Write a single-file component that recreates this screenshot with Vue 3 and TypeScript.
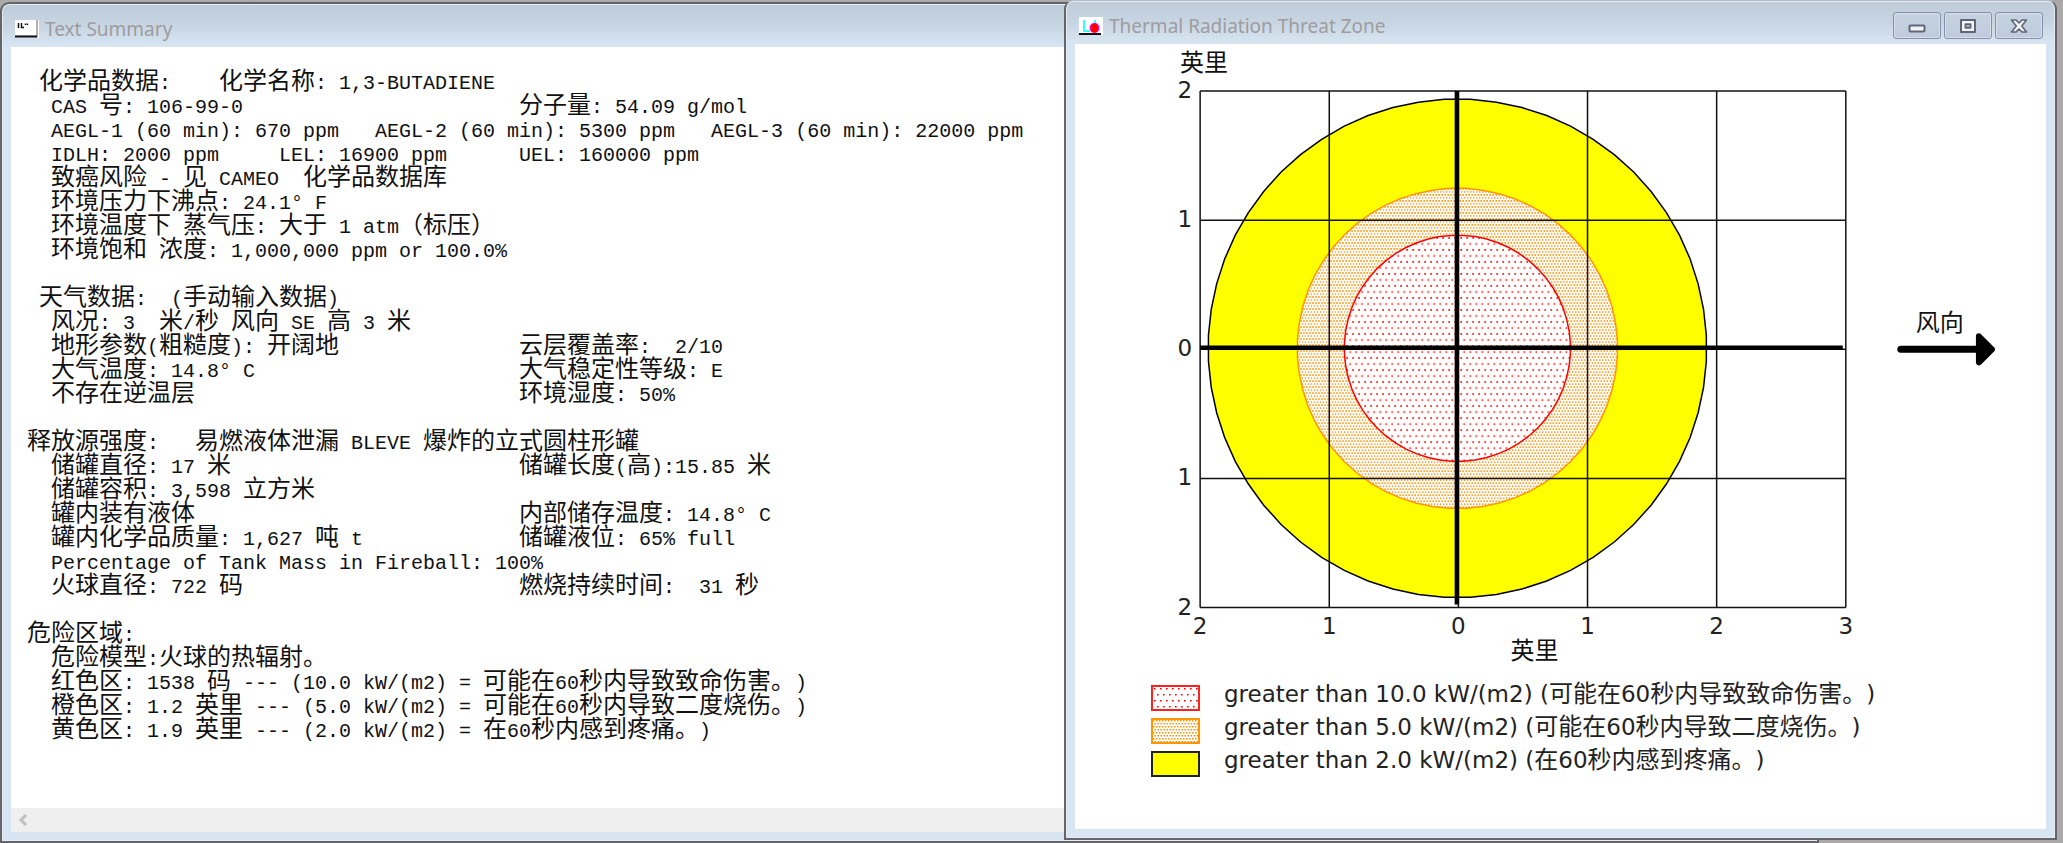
<script setup lang="ts">
type Row = [col: number, text: string, right?: string]
interface Run { text: string; wide: boolean }

const RIGHT_COLUMN = 41
const WIDE = /[\u3001-\u303f\u4e00-\u9fff\uff00-\uffef]/

const rows: Row[] = [
  [1, '化学品数据:    化学名称: 1,3-BUTADIENE'],
  [2, 'CAS 号: 106-99-0', '分子量: 54.09 g/mol'],
  [2, 'AEGL-1 (60 min): 670 ppm   AEGL-2 (60 min): 5300 ppm   AEGL-3 (60 min): 22000 ppm'],
  [2, 'IDLH: 2000 ppm     LEL: 16900 ppm', 'UEL: 160000 ppm'],
  [2, '致癌风险 - 见 CAMEO  化学品数据库'],
  [2, '环境压力下沸点: 24.1° F'],
  [2, '环境温度下 蒸气压: 大于 1 atm（标压）'],
  [2, '环境饱和 浓度: 1,000,000 ppm or 100.0%'],
  [0, ''],
  [1, '天气数据:  (手动输入数据)'],
  [2, '风况: 3  米/秒 风向 SE 高 3 米'],
  [2, '地形参数(粗糙度): 开阔地', '云层覆盖率:  2/10'],
  [2, '大气温度: 14.8° C', '大气稳定性等级: E'],
  [2, '不存在逆温层', '环境湿度: 50%'],
  [0, ''],
  [0, '释放源强度:   易燃液体泄漏 BLEVE 爆炸的立式圆柱形罐'],
  [2, '储罐直径: 17 米', '储罐长度(高):15.85 米'],
  [2, '储罐容积: 3,598 立方米'],
  [2, '罐内装有液体', '内部储存温度: 14.8° C'],
  [2, '罐内化学品质量: 1,627 吨 t', '储罐液位: 65% full'],
  [2, 'Percentage of Tank Mass in Fireball: 100%'],
  [2, '火球直径: 722 码', '燃烧持续时间:  31 秒'],
  [0, ''],
  [0, '危险区域:'],
  [2, '危险模型:火球的热辐射。'],
  [2, '红色区: 1538 码 --- (10.0 kW/(m2) = 可能在60秒内导致致命伤害。)'],
  [2, '橙色区: 1.2 英里 --- (5.0 kW/(m2) = 可能在60秒内导致二度烧伤。)'],
  [2, '黄色区: 1.9 英里 --- (2.0 kW/(m2) = 在60秒内感到疼痛。)'],
]

const legend = [
  { kind: 'red', text: 'greater than 10.0 kW/(m2) (可能在60秒内导致致命伤害。)' },
  { kind: 'orange', text: 'greater than 5.0 kW/(m2) (可能在60秒内导致二度烧伤。)' },
  { kind: 'yellow', text: 'greater than 2.0 kW/(m2) (在60秒内感到疼痛。)' },
]

// A Chinese character takes two cells of the monospaced grid.
function cells(text: string): number {
  return [...text].reduce((n, ch) => n + (WIDE.test(ch) ? 2 : 1), 0)
}

function compose([col, text, right]: Row): string {
  const line = ' '.repeat(col) + text
  return right ? line + ' '.repeat(RIGHT_COLUMN - cells(line)) + right : line
}

function runs(text: string): Run[] {
  const out: Run[] = []
  for (const ch of text) {
    const wide = WIDE.test(ch)
    const last = out[out.length - 1]
    if (last && last.wide === wide) last.text += ch
    else out.push({ text: ch, wide })
  }
  return out
}

const summary = rows.map((row) => runs(compose(row)))
const legendRows = legend.map((item) => ({ kind: item.kind, runs: runs(item.text) }))

// Chart geometry, in viewBox units: one mile is 129 units.
const MILE = 129
const LEFT = 125
const TOP = 47
const columns = [2, 1, 0, 1, 2, 3].map((label, i) => ({ label, at: LEFT + i * MILE }))
const lines = [2, 1, 0, 1, 2].map((label, i) => ({ label, at: TOP + i * MILE }))

function ring(radius: number): string {
  const points: string[] = []
  for (let deg = 3; deg < 363; deg += 6) {
    const a = (deg * Math.PI) / 180
    points.push(`${(382 + radius * Math.cos(a)).toFixed(1)},${(304 - radius * Math.sin(a)).toFixed(1)}`)
  }
  return points.join(' ')
}
</script>

<template>
  <main class="desktop">
    <section class="window summary" aria-label="Text Summary">
      <header class="titlebar">
        <svg class="app-icon" viewBox="0 0 24 18" aria-hidden="true">
          <rect width="24" height="18" fill="#fff" />
          <path d="M0 16.5H22V0" fill="none" stroke="#999" stroke-width="1.5" />
          <path d="M0 16.5H22" stroke="#111" stroke-width="2" />
          <path d="M3.5 3V8M6.5 3V7.5H9M10.5 3.5V5M12.5 3.5V5" fill="none" stroke="#111" stroke-width="1.5" />
        </svg>
        <h1>Text Summary</h1>
      </header>
      <div class="client text-client">
        <div class="report">
          <p v-for="(line, i) in summary" :key="i"><span v-for="(run, j) in line" :key="j" :class="{ wide: run.wide }">{{ run.text }}</span></p>
        </div>
        <div class="scrollbar">
          <button type="button" aria-label="Scroll left">
            <svg viewBox="0 0 10 12" aria-hidden="true"><path d="M8 1L3 6L8 11" fill="none" stroke="#bfbfbf" stroke-width="3" /></svg>
          </button>
        </div>
      </div>
    </section>

    <section class="window threat" aria-label="Thermal Radiation Threat Zone">
      <header class="titlebar">
        <svg class="app-icon" viewBox="0 0 24 18" aria-hidden="true">
          <rect width="24" height="18" fill="#fff" />
          <path d="M5 3V14H11M16 3V7" fill="none" stroke="#3ff" stroke-width="2" />
          <ellipse cx="15.5" cy="11" rx="5" ry="5" fill="#f0f" />
          <ellipse cx="15.5" cy="11" rx="4" ry="4.5" fill="#f00" />
          <path d="M0 17H22" stroke="#111" stroke-width="2" />
        </svg>
        <h1>Thermal Radiation Threat Zone</h1>
        <div class="controls">
          <button type="button" aria-label="Minimize">
            <svg viewBox="0 0 18 14" aria-hidden="true"><rect x="1.5" y="6.5" width="15" height="6" rx="1" fill="#f4f4f4" stroke="#5f6678" stroke-width="2" /></svg>
          </button>
          <button type="button" aria-label="Maximize">
            <svg viewBox="0 0 18 14" aria-hidden="true"><path d="M2 1H16V13H2ZM6.5 5.2V8.8H11.5V5.2Z" fill="#f4f4f4" fill-rule="evenodd" stroke="#5f6678" stroke-width="2" stroke-linejoin="round" /></svg>
          </button>
          <button type="button" aria-label="Close">
            <svg viewBox="0 0 18 14" aria-hidden="true"><path d="M1.5 1H6L9 4L12 1H16.5L11.7 7L16.5 13H12L9 10L6 13H1.5L6.3 7Z" fill="#f4f4f4" stroke="#5f6678" stroke-width="1.6" stroke-linejoin="round" /></svg>
          </button>
        </div>
      </header>
      <div class="client chart-client">
        <svg class="chart" viewBox="0 0 970 630" role="img" aria-label="Threat zone">
          <defs>
            <pattern id="red-dots" width="6" height="12" patternUnits="userSpaceOnUse">
              <rect width="6" height="12" fill="#fff" />
              <path d="M1 1h1.6v1.6h-1.6zM4 7h1.6v1.6h-1.6z" fill="#f00" />
            </pattern>
            <pattern id="orange-dots" width="3" height="6" patternUnits="userSpaceOnUse">
              <rect width="3" height="6" fill="#fff" />
              <path d="M0 0h1.5v1.5h-1.5zM1.5 3h1.5v1.5h-1.5z" fill="#ff9000" />
            </pattern>
          </defs>
          <polygon :points="ring(249)" fill="#ff0" stroke="#000" stroke-width="1.5" />
          <polygon :points="ring(160)" fill="url(#orange-dots)" stroke="#ff9500" stroke-width="1.5" />
          <polygon :points="ring(113)" fill="url(#red-dots)" stroke="#f00" stroke-width="1.5" />
          <g stroke="#111" stroke-width="1.5">
            <line v-for="(c, i) in columns" :key="i" :x1="c.at" :x2="c.at" :y1="TOP" :y2="TOP + 4 * MILE" />
            <line v-for="(l, i) in lines" :key="i" :x1="LEFT" :x2="LEFT + 5 * MILE" :y1="l.at" :y2="l.at" />
          </g>
          <path d="M381.5 47V560M125 303.5H767" stroke="#000" stroke-width="4.5" />
          <g class="digits">
            <text v-for="(c, i) in columns" :key="i" :x="c.at" y="589" text-anchor="middle">{{ c.label }}</text>
            <text v-for="(l, i) in lines" :key="i" x="117" :y="l.at + 7" text-anchor="end">{{ l.label }}</text>
          </g>
          <g class="units">
            <text x="105" y="27">英里</text>
            <text x="435" y="614">英里</text>
            <text x="840" y="287">风向</text>
          </g>
          <path d="M825 305H902" stroke="#000" stroke-width="7" stroke-linecap="round" />
          <path d="M903 292L916 305L903 318Z" fill="#000" stroke="#000" stroke-width="6" stroke-linejoin="round" />
        </svg>
        <ul class="legend">
          <li v-for="item in legendRows" :key="item.kind">
            <svg class="swatch" :class="item.kind" aria-hidden="true"><rect width="100%" height="100%" /></svg>
            <span class="caption"><span v-for="(run, j) in item.runs" :key="j" :class="{ wide: run.wide }">{{ run.text }}</span></span>
          </li>
        </ul>
      </div>
    </section>
  </main>
</template>

<style>
body {
  margin: 0;
  background: #aaa8a9;
}
</style>

<style scoped>
.desktop {
  display: grid;
  grid-template-columns: minmax(0, 1064fr) minmax(0, 755fr) minmax(0, 238fr) minmax(0, 6fr);
  grid-template-rows: minmax(0, 1fr) 3px;
  height: 100vh;
  overflow: hidden;
  background: #aaa8a9;
}
.window {
  display: flex;
  flex-direction: column;
  box-sizing: border-box;
  min-height: 0;
  padding: 0 9px 9px;
  border: 2px solid #656468;
  border-radius: 9px 9px 0 0;
  background: linear-gradient(#becbd8, #c8d5e2 22px, #d7e4f1 42px);
  box-shadow: inset 0 0 0 1px #e4edf6;
}
.summary {
  grid-area: 1 / 1 / 3 / 3;
  margin-top: 2px;
}
.threat {
  grid-area: 1 / 2 / 2 / 4;
  z-index: 1;
  border-top-color: #b4bac6;
  border-top-width: 1px;
}
.titlebar {
  display: flex;
  flex: none;
  align-items: center;
  gap: 6px;
  height: 43px;
  padding: 6px 3px 0 4px;
  box-sizing: border-box;
}
.app-icon {
  width: 24px;
  height: 18px;
}
h1 {
  margin: 0;
  flex: 1;
  font: 400 19px/24px "Noto Sans", "Open Sans", sans-serif;
  color: #9d9da0;
}
.controls {
  display: flex;
  gap: 3px;
}
.controls button {
  display: grid;
  place-items: center;
  width: 48px;
  height: 27px;
  padding: 0;
  border: 1px solid #8590ab;
  border-radius: 3px;
  background: linear-gradient(#c6d3e1, #bdcbdc);
  box-shadow: inset 0 0 0 1px #d5dfeb;
}
.controls svg {
  width: 18px;
  height: 14px;
}
.client {
  display: flex;
  flex: 1;
  flex-direction: column;
  min-height: 0;
  overflow: hidden;
  background: #fff;
  text-spacing-trim: space-all;
}
.report {
  flex: 1;
  min-height: 0;
  overflow: hidden;
  padding: 25px 0 0 16px;
  font: 20px/24px "Liberation Mono", "Courier New", monospace;
  color: #111;
  white-space: pre;
}
.report p {
  margin: 0;
  height: 24px;
}
.wide {
  font-family: "Liberation Sans", "Noto Sans CJK SC", sans-serif;
  font-size: 24px;
  line-height: 0;
}
.scrollbar {
  display: flex;
  flex: none;
  height: 24px;
  background: #efefef;
}
.scrollbar button {
  display: grid;
  place-items: center;
  width: 24px;
  padding: 0;
  border: 0;
  background: none;
}
.scrollbar svg {
  width: 10px;
  height: 12px;
}
.chart {
  display: block;
  flex: none;
  width: 100%;
}
.digits {
  font: 23px "DejaVu Sans", Verdana, sans-serif;
  fill: #222;
}
.units {
  font: 24px "Liberation Sans", "Noto Sans CJK SC", sans-serif;
  fill: #111;
}
.legend {
  margin: 0;
  padding: 10px 0 0 76px;
  list-style: none;
  font: 23px/18px "DejaVu Sans", Verdana, sans-serif;
  color: #222;
}
.legend li {
  display: flex;
  align-items: flex-start;
  gap: 24px;
  height: 33px;
  white-space: nowrap;
}
.swatch {
  box-sizing: border-box;
  flex: none;
  width: 49px;
  height: 26px;
  border: 2px solid;
}
.swatch.red {
  border-color: #ff2020;
  fill: url(#red-dots);
}
.swatch.orange {
  border-color: #ff9500;
  fill: url(#orange-dots);
}
.swatch.yellow {
  border-color: #222;
  fill: #ff0;
}
</style>
